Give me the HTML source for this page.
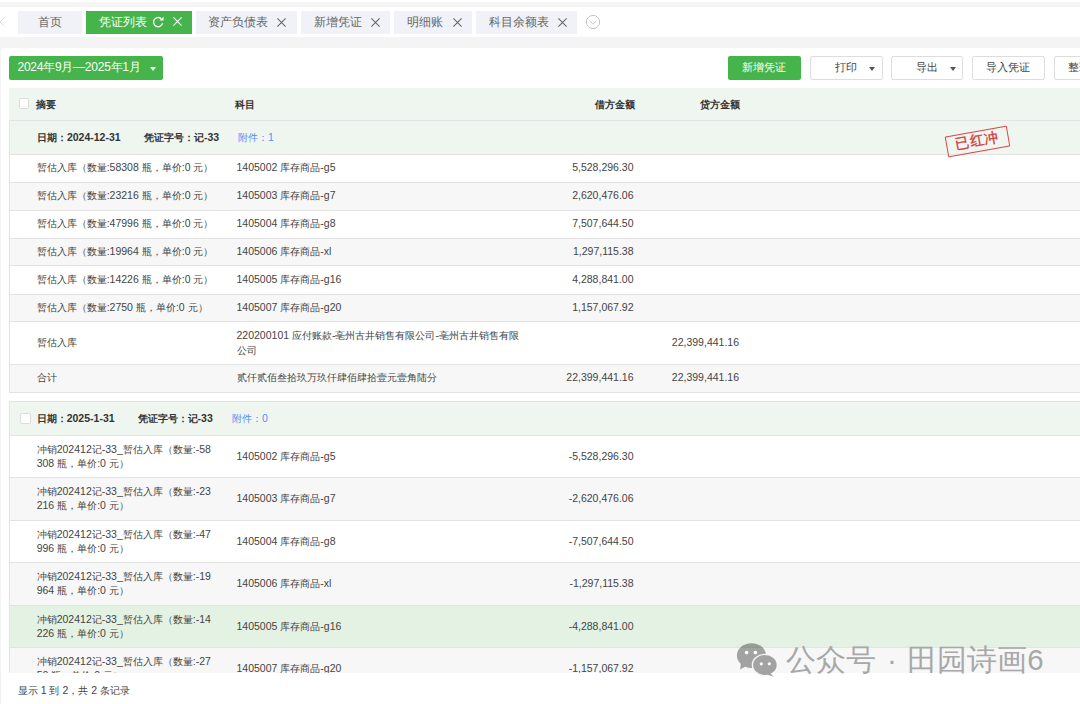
<!DOCTYPE html>
<html><head><meta charset="utf-8">
<style>
*{box-sizing:border-box;margin:0;padding:0}
html,body{width:1080px;height:704px;overflow:hidden;background:#fff;font-family:"Liberation Sans",sans-serif;color:#555}
.abs{position:absolute}
#topband{left:0;top:2px;width:1080px;height:5px;background:#f5f5f5}
#grayband{left:0;top:37px;width:1080px;height:667px;background:#f4f4f4}
#card{left:1px;top:47.5px;width:1090px;height:670px;background:#fff;border-radius:3px}
.tab{position:absolute;top:10.5px;height:23.5px;background:#f0f2f8;color:#666;font-size:12px;line-height:23.5px;white-space:nowrap}
.tab.on{background:#44b44b;color:#fff}
.tab .x{position:absolute;top:0}
.btn{position:absolute;top:56px;height:24px;border-radius:2px;font-size:11px;line-height:22px;white-space:nowrap}
.btn.g{background:#44b44b;color:#fff}
.btn.w{background:#fff;border:1px solid #ddd;color:#444;line-height:20px}
.caret{position:absolute;width:0;height:0;border-left:3.5px solid transparent;border-right:3.5px solid transparent;border-top:4px solid #555}
.row{position:absolute;left:9px;width:1090px;border-bottom:1px solid #e3e3e3;border-left:1px solid #e3e3e3;font-size:10.5px;color:#444}
.t{position:absolute;white-space:nowrap}
.row .c1{left:26.7px}
.row .c2{left:226.5px}
.row .c3{left:523.5px;width:100px;text-align:right}
.row .c4{left:629px;width:100px;text-align:right}
.two{line-height:14.8px}
.row .c1.two{top:5.5px}
.cb{position:absolute;width:10.5px;height:10.5px;border:1px solid #dcdcdc;border-radius:2px;background:#fff}
.hd{font-weight:bold;color:#333}
.k{font-size:10px;line-height:0}
</style></head><body>
<div class="abs" id="topband"></div>
<div class="abs" id="grayband"></div>
<div class="abs" id="card"></div>

<!-- tabs -->
<div class="tab" style="left:18px;width:64px"><span class="t" style="left:20px">首页</span></div>
<div class="tab on" style="left:86px;width:106px"><span class="t" style="left:13px">凭证列表</span></div>
<div class="tab" style="left:196px;width:101px"><span class="t" style="left:12px">资产负债表</span></div>
<div class="tab" style="left:300.5px;width:89.5px"><span class="t" style="left:13px">新增凭证</span></div>
<div class="tab" style="left:394px;width:78px"><span class="t" style="left:13px">明细账</span></div>
<div class="tab" style="left:475.5px;width:101.5px"><span class="t" style="left:13px">科目余额表</span></div>


<!-- tab icons -->
<svg class="abs" style="left:-1px;top:16px" width="7" height="12" viewBox="0 0 7 12"><path d="M5.5 1.5L1 6L5.5 10.5" stroke="#dcdcdc" stroke-width="1" fill="none"/></svg>
<svg class="abs" style="left:152px;top:15.8px" width="12" height="12" viewBox="0 0 12 12"><path d="M10.6 7.2A4.6 4.6 0 1 1 9.2 2.7" stroke="#fff" stroke-width="1.35" fill="none"/><path d="M7.4 4.5L11.6 0.7L11.5 4.6Z" fill="#fff"/></svg>
<div class="abs" style="left:173px;top:17px;width:9px;height:9px;line-height:0"><svg width="9" height="9" viewBox="0 0 9 9"><path d="M0.4 0.4L8.6 8.6M8.6 0.4L0.4 8.6" stroke="#fff" stroke-width="1.05" fill="none"/></svg></div>
<div class="abs" style="left:277px;top:18px;width:9px;height:9px;line-height:0"><svg width="9" height="9" viewBox="0 0 9 9"><path d="M0.4 0.4L8.6 8.6M8.6 0.4L0.4 8.6" stroke="#666" stroke-width="1.05" fill="none"/></svg></div>
<div class="abs" style="left:370.8px;top:18px;width:9px;height:9px;line-height:0"><svg width="9" height="9" viewBox="0 0 9 9"><path d="M0.4 0.4L8.6 8.6M8.6 0.4L0.4 8.6" stroke="#666" stroke-width="1.05" fill="none"/></svg></div>
<div class="abs" style="left:452.5px;top:18px;width:9px;height:9px;line-height:0"><svg width="9" height="9" viewBox="0 0 9 9"><path d="M0.4 0.4L8.6 8.6M8.6 0.4L0.4 8.6" stroke="#666" stroke-width="1.05" fill="none"/></svg></div>
<div class="abs" style="left:558px;top:18px;width:9px;height:9px;line-height:0"><svg width="9" height="9" viewBox="0 0 9 9"><path d="M0.4 0.4L8.6 8.6M8.6 0.4L0.4 8.6" stroke="#666" stroke-width="1.05" fill="none"/></svg></div>
<svg class="abs" style="left:585px;top:14px" width="16" height="16" viewBox="0 0 16 16"><circle cx="8" cy="8" r="6.6" stroke="#c4c4c4" stroke-width="1" fill="none"/><path d="M4.3 6.5L8 10.3L11.7 6.5" stroke="#c4c4c4" stroke-width="1" fill="none"/></svg>
<!-- toolbar -->
<div class="btn g" style="left:9px;width:154px;font-size:12px"><span class="t" style="left:8.5px;letter-spacing:-0.25px">2024年9月—2025年1月</span><span class="caret" style="left:141px;top:10.5px;border-top-color:#fff;border-left-width:3.8px;border-right-width:3.8px;border-top-width:4.5px"></span></div>
<div class="btn g" style="left:728px;width:73px"><span class="t" style="left:13.7px">新增凭证</span></div>
<div class="btn w" style="left:809.5px;width:73px"><span class="t" style="left:24px">打印</span><span class="caret" style="left:58px;top:10px"></span></div>
<div class="btn w" style="left:890.7px;width:72.6px"><span class="t" style="left:24px">导出</span><span class="caret" style="left:58px;top:10px"></span></div>
<div class="btn w" style="left:972.2px;width:72.6px"><span class="t" style="left:13px">导入凭证</span></div>
<div class="btn w" style="left:1054px;width:72.6px"><span class="t" style="left:13px">整理凭证</span></div>


<div class="row" style="top:88px;height:33px;background:#eff5ef;line-height:30px;line-height:32px;border-left:none;"><span class="cb" style="left:9.5px;top:10.3px"></span><span class="t hd" style="left:27.3px"><span class="k">摘要</span></span><span class="t hd c2" style="left:226px"><span class="k">科目</span></span><span class="t hd c3" style="left:526px"><span class="k">借方金额</span></span><span class="t hd c4" style="left:631px"><span class="k">贷方金额</span></span></div>
<div class="row" style="top:121px;height:34px;background:#eff5ef;line-height:31px;line-height:32px;"><span class="t hd" style="left:26.9px"><span class="k">日期：</span>2024-12-31</span><span class="t hd" style="left:133.9px"><span class="k">凭证字号：记</span>-33</span><span class="t" style="left:228px;color:#5b8def"><span class="k">附件：</span>1</span></div>
<div class="row" style="top:155px;height:28px;background:#fff;line-height:25px;"><span class="t c1"><span class="k">暂估入库（数量</span>:58308 <span class="k">瓶，单价</span>:0 <span class="k">元）</span></span><span class="t c2">1405002 <span class="k">库存商品</span>-g5</span><span class="t c3">5,528,296.30</span><span class="t c4"></span></div>
<div class="row" style="top:183px;height:28px;background:#f7f7f7;line-height:25px;"><span class="t c1"><span class="k">暂估入库（数量</span>:23216 <span class="k">瓶，单价</span>:0 <span class="k">元）</span></span><span class="t c2">1405003 <span class="k">库存商品</span>-g7</span><span class="t c3">2,620,476.06</span><span class="t c4"></span></div>
<div class="row" style="top:211px;height:28px;background:#fff;line-height:25px;"><span class="t c1"><span class="k">暂估入库（数量</span>:47996 <span class="k">瓶，单价</span>:0 <span class="k">元）</span></span><span class="t c2">1405004 <span class="k">库存商品</span>-g8</span><span class="t c3">7,507,644.50</span><span class="t c4"></span></div>
<div class="row" style="top:239px;height:27px;background:#f7f7f7;line-height:24px;"><span class="t c1"><span class="k">暂估入库（数量</span>:19964 <span class="k">瓶，单价</span>:0 <span class="k">元）</span></span><span class="t c2">1405006 <span class="k">库存商品</span>-xl</span><span class="t c3">1,297,115.38</span><span class="t c4"></span></div>
<div class="row" style="top:266px;height:29px;background:#fff;line-height:26px;"><span class="t c1"><span class="k">暂估入库（数量</span>:14226 <span class="k">瓶，单价</span>:0 <span class="k">元）</span></span><span class="t c2">1405005 <span class="k">库存商品</span>-g16</span><span class="t c3">4,288,841.00</span><span class="t c4"></span></div>
<div class="row" style="top:295px;height:27px;background:#f7f7f7;line-height:24px;"><span class="t c1"><span class="k">暂估入库（数量</span>:2750 <span class="k">瓶，单价</span>:0 <span class="k">元）</span></span><span class="t c2">1405007 <span class="k">库存商品</span>-g20</span><span class="t c3">1,157,067.92</span><span class="t c4"></span></div>
<div class="row" style="top:322px;height:43px;background:#fff;line-height:40px;"><span class="t c1"><span class="k">暂估入库</span></span><span class="t c2 two" style="top:6px">220200101 <span class="k">应付账款</span>-<span class="k">亳州古井销售有限公司</span>-<span class="k">亳州古井销售有限</span><br><span class="k">公司</span></span><span class="t c4">22,399,441.16</span></div>
<div class="row" style="top:365px;height:28px;background:#f7f7f7;line-height:25px;"><span class="t c1"><span class="k">合计</span></span><span class="t c2"><span class="k">贰仟贰佰叁拾玖万玖仟肆佰肆拾壹元壹角陆分</span></span><span class="t c3">22,399,441.16</span><span class="t c4">22,399,441.16</span></div>
<div class="row" style="top:401px;height:35px;background:#eff5ef;line-height:32px;border-top:1px solid #e3e3e3;line-height:33px;"><span class="cb" style="left:10.2px;top:11px"></span><span class="t hd" style="left:26.7px"><span class="k">日期：</span>2025-1-31</span><span class="t hd" style="left:127.6px"><span class="k">凭证字号：记</span>-33</span><span class="t" style="left:222px;color:#5b8def"><span class="k">附件：</span>0</span></div>
<div class="row" style="top:436px;height:42px;background:#fff;line-height:39px;line-height:40px;"><span class="t c1 two"><span class="k">冲销</span>202412<span class="k">记</span>-33_<span class="k">暂估入库（数量</span>:-58<br>308 <span class="k">瓶，单价</span>:0 <span class="k">元）</span></span><span class="t c2">1405002 <span class="k">库存商品</span>-g5</span><span class="t c3">-5,528,296.30</span></div>
<div class="row" style="top:478px;height:43px;background:#f7f7f7;line-height:40px;line-height:41px;"><span class="t c1 two"><span class="k">冲销</span>202412<span class="k">记</span>-33_<span class="k">暂估入库（数量</span>:-23<br>216 <span class="k">瓶，单价</span>:0 <span class="k">元）</span></span><span class="t c2">1405003 <span class="k">库存商品</span>-g7</span><span class="t c3">-2,620,476.06</span></div>
<div class="row" style="top:521px;height:42px;background:#fff;line-height:39px;line-height:40px;"><span class="t c1 two"><span class="k">冲销</span>202412<span class="k">记</span>-33_<span class="k">暂估入库（数量</span>:-47<br>996 <span class="k">瓶，单价</span>:0 <span class="k">元）</span></span><span class="t c2">1405004 <span class="k">库存商品</span>-g8</span><span class="t c3">-7,507,644.50</span></div>
<div class="row" style="top:563px;height:43px;background:#f7f7f7;line-height:40px;line-height:41px;"><span class="t c1 two"><span class="k">冲销</span>202412<span class="k">记</span>-33_<span class="k">暂估入库（数量</span>:-19<br>964 <span class="k">瓶，单价</span>:0 <span class="k">元）</span></span><span class="t c2">1405006 <span class="k">库存商品</span>-xl</span><span class="t c3">-1,297,115.38</span></div>
<div class="row" style="top:606px;height:42px;background:#e3f2e3;line-height:39px;line-height:40px;"><span class="t c1 two"><span class="k">冲销</span>202412<span class="k">记</span>-33_<span class="k">暂估入库（数量</span>:-14<br>226 <span class="k">瓶，单价</span>:0 <span class="k">元）</span></span><span class="t c2">1405005 <span class="k">库存商品</span>-g16</span><span class="t c3">-4,288,841.00</span></div>
<div class="row" style="top:648px;height:43px;background:#f7f7f7;line-height:40px;line-height:41px;"><span class="t c1 two"><span class="k">冲销</span>202412<span class="k">记</span>-33_<span class="k">暂估入库（数量</span>:-27<br>50 <span class="k">瓶，单价</span>:0 <span class="k">元）</span></span><span class="t c2">1405007 <span class="k">库存商品</span>-g20</span><span class="t c3">-1,157,067.92</span></div>
<div class="abs" style="left:0;top:673px;width:1080px;height:31px;background:#fff"></div>
<div class="abs" style="left:0;top:673px;width:1px;height:31px;background:#f0f0f0"></div>
<div class="abs t" style="left:17.8px;top:683px;font-size:10.5px;line-height:14px;color:#444"><span class="k">显示</span> 1 <span class="k">到</span> 2<span class="k">，共</span> 2 <span class="k">条记录</span></div>

<!-- stamp -->
<div class="abs" style="left:945.5px;top:131px;width:63px;height:21px;border:1.7px solid #d8474a;border-radius:1px;transform:rotate(-10deg);color:#d5393c;font-size:14px;line-height:17px;text-align:center;letter-spacing:0.8px;-webkit-text-stroke:0.35px #d5393c">已红冲</div>
<!-- watermark -->
<svg class="abs" style="left:736px;top:642px" width="43" height="36" viewBox="0 0 43 36">
<g opacity="0.34">
<ellipse cx="15.5" cy="13.6" rx="14.6" ry="12.4" fill="#000"/>
<path d="M5 21L4 27.5L12 23Z" fill="#000"/>
</g>
<ellipse cx="28.9" cy="23" rx="13.2" ry="11.2" fill="#f7f7f7"/>
<g opacity="0.34">
<ellipse cx="28.9" cy="23" rx="11.8" ry="10" fill="#000"/>
<path d="M34 31L38 35L30 32Z" fill="#000"/>
</g>
<circle cx="10.6" cy="10.6" r="1.8" fill="#fff"/><circle cx="19.4" cy="10.6" r="1.8" fill="#fff"/>
<circle cx="25.3" cy="21.8" r="1.6" fill="#fff"/><circle cx="33.3" cy="21.8" r="1.6" fill="#fff"/>
</svg>
<div class="abs t" style="left:786.4px;top:641.5px;font-size:29.5px;line-height:36px;color:#a8a8a8;word-spacing:2.3px">公众号 · 田园诗画6</div>
</body></html>
